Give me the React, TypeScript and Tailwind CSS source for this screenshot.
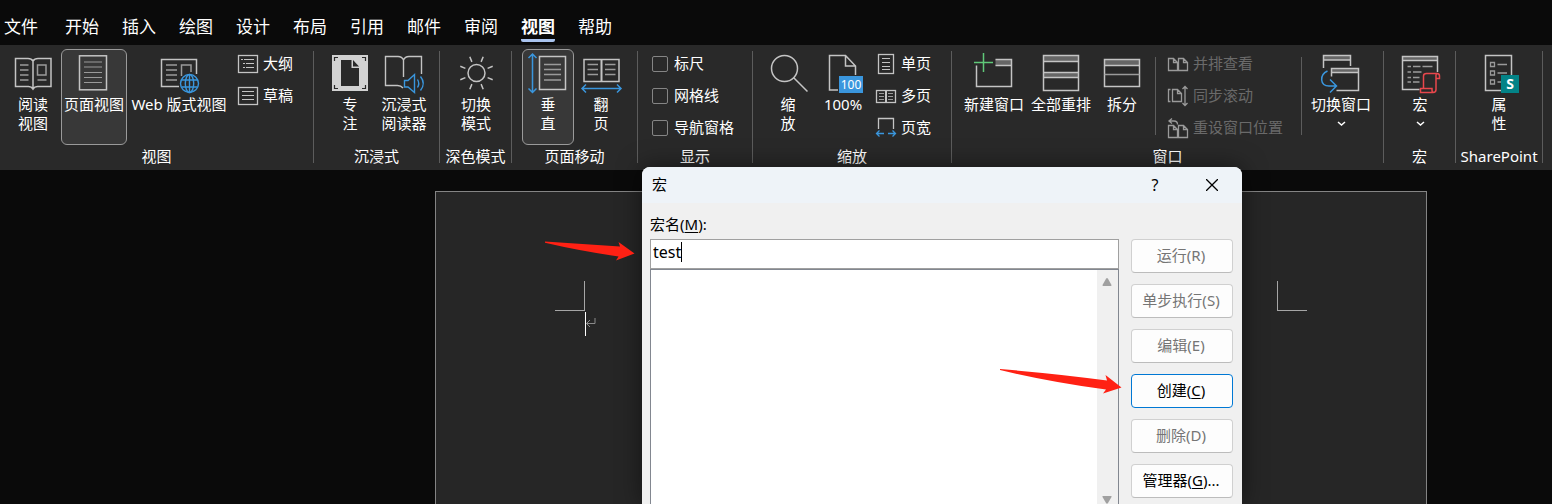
import { useState, type ReactNode } from "react";

const GRAY = "#c4c4c4";
const DIM = "#9a9a9a";
const BLUE = "#3a96dd";

function Icon({ children }: { children: ReactNode }) {
  return (
    <svg width="40" height="40" viewBox="0 0 40 40" fill="none" stroke={GRAY} strokeWidth="1.5" className="shrink-0 overflow-visible" aria-hidden="true">
      {children}
    </svg>
  );
}

function SmallIcon({ children, dim }: { children: ReactNode; dim?: boolean }) {
  return (
    <svg width="20" height="20" viewBox="0 0 20 20" fill="none" stroke={dim ? DIM : GRAY} strokeWidth="1.3" className="shrink-0 overflow-visible" aria-hidden="true">
      {children}
    </svg>
  );
}

const ReadIcon = () => (
  <Icon>
    <path d="M20 8Q18.500 5.500 15 5.500H2.500V33.500H15.500Q18.500 33.500 20 36Q21.500 33.500 24.500 33.500H38V5.500H25Q21.500 5.500 20 8V36" />
    <path stroke={DIM} d="M7 12H15.500M7 17H15.500M7 22H15.500M7 27H15.500M24.500 27H33.500" />
    <rect x="24.5" y="12" width="8.500" height="10" stroke={DIM} />
  </Icon>
);
const PageIcon = () => (
  <Icon>
    <rect x="5.500" y="2.800" width="27" height="34" />
    <path stroke={DIM} strokeWidth="1.200" d="M10 9H28M10 14H28M10 19.500H28M10 24.500H28M10 29.500H28" />
  </Icon>
);
const WebIcon = () => (
  <Icon>
    <path d="M20 33.500H2.500V6.500H37.500V21" />
    <path stroke={DIM} d="M7 12H18M7 17H18M7 22H18M7 27H18M22.500 23V12H32V19" />
    <g stroke={BLUE} strokeWidth="1.400">
      <circle cx="30.5" cy="30.500" r="9" />
      <ellipse cx="30.5" cy="30.500" rx="4.200" ry="9" />
      <path d="M30.500 21.500V39.500M22.500 27H38.500M22.500 34H38.500" />
    </g>
  </Icon>
);
const FocusIcon = () => (
  <Icon>
    <rect x="2" y="2" width="36" height="36" fill="#d2d2d2" stroke="none" />
    <path d="M11 7H21.500V15H29V33H11Z" fill="#292929" stroke="none" />
    <path d="M23 7L29 13.500H23Z" fill="#292929" stroke="none" />
    <path stroke="#292929" strokeWidth="1.200" d="M4.500 8V4.500H8M32 4.500H35.500V8M35.500 32V35.500H32M8 35.500H4.500V32" />
  </Icon>
);
const ReaderIcon = () => (
  <Icon>
    <path strokeWidth="1.400" d="M19.500 7Q18 3.500 14 3.500H1.500V32.500H13.500Q17 32.500 19 35M19.500 7V24M19.500 7Q21 3.500 25 3.500H37.500V21" />
    <g stroke={BLUE} strokeWidth="1.400">
      <path d="M20.500 27.500H24L30.500 21.500V39.500L24 34H20.500Z" />
      <path d="M33.500 26.500Q36 30.500 33.500 34.500M36.500 23.500Q42 30.500 36.500 37.500" />
    </g>
  </Icon>
);
const SunIcon = () => (
  <Icon>
    <circle cx="20.500" cy="20" r="8.500" />
    <path d="M31.600 15.400L36.700 13.300M31.600 24.600L36.700 26.700M9.400 15.400L4.300 13.300M9.400 24.600L4.300 26.700M25.100 8.900L27.200 3.800M15.900 8.900L13.800 3.800M25.100 31.100L27.200 36.200M15.900 31.100L13.800 36.200" />
  </Icon>
);
const VerticalIcon = () => (
  <Icon>
    <rect x="11.500" y="3.500" width="26" height="33" />
    <path stroke={DIM} d="M16 11.500H33M16 16.500H33M16 21.500H33M16 27H33" />
    <path stroke={BLUE} d="M4.500 1V39.500M.5 5L4.500 1L8.500 5M.5 35.500L4.500 39.500L8.500 35.500" />
  </Icon>
);
const FlipIcon = () => (
  <Icon>
    <rect x="3" y="6.500" width="35" height="22" />
    <path strokeWidth="2" d="M20.500 6V29" />
    <path stroke={DIM} d="M6.500 11.500H17M6.500 16.500H17M6.500 21.500H17M24 11.500H34.500M24 16.500H34.500M24 21.500H34.500" />
    <path stroke={BLUE} d="M1 35.500H40M5 31.500L1 35.500L5 39.500M36 31.500L40 35.500L36 39.500" />
  </Icon>
);
const ZoomIcon = () => (
  <Icon>
    <circle cx="16.500" cy="15.500" r="13" />
    <path d="M25.500 24.500L39.500 38.500" />
  </Icon>
);
const HundredIcon = () => (
  <Icon>
    <path d="M15 37H6.500V2.500H22.500L32.500 13V22M22.500 2.500V13H32.500" />
    <rect x="16" y="23" width="24" height="17" fill={BLUE} stroke="none" />
    <text x="28" y="36" textAnchor="middle" fontSize="12" fill="#fff" stroke="none">100</text>
  </Icon>
);
const NewWindowIcon = () => (
  <Icon>
    <rect x="21.500" y="6.500" width="16.500" height="6" fill="#666" stroke="none" />
    <path d="M21.500 6.500H37.500V33.500H2.500V12.500M21.500 12.500H37.500" />
    <path stroke="#5fc878" d="M0 9.500H19M9.500 0V19" />
  </Icon>
);
const ArrangeIcon = () => (
  <Icon>
    <path fill="#666" stroke="none" d="M2.500 2.500H37.500V8.500H2.500ZM2.500 19.500H37.500V24.500H2.500Z" />
    <path d="M2.500 2.500H37.500V37.500H2.500ZM2.500 8.500H37.500M2.500 19.500H37.500M2.500 24.500H37.500" />
  </Icon>
);
const SplitIcon = () => (
  <Icon>
    <path fill="#666" stroke="none" d="M2.500 6.500H37.500V12.500H2.500Z" />
    <path d="M2.500 6.500H37.500V33.500H2.500ZM2.500 12.500H37.500" />
    <path stroke={DIM} d="M2.500 21.500H37.500" />
  </Icon>
);
const SwitchIcon = () => (
  <Icon>
    <path fill="#666" stroke="none" d="M2.500 2.500H29V7H2.500ZM10.500 15.500H37.500V19.500H10.500Z" />
    <path d="M2.500 15V2.500H29.500V13M2.500 7H29.500M10.500 23.500V15.500H37.500V37.500H15.500M10.500 19.500H37.500" />
    <path stroke={BLUE} d="M6.500 18C-2 22-1 33 8 33H15.500M9 26.500L15.500 33L9 39.500" />
  </Icon>
);
const MacroIcon = () => (
  <Icon>
    <path fill="#666" stroke="none" d="M2.500 3.500H37.500V7.500H2.500Z" />
    <path d="M19.500 36.500H2.500V3.500H37.500V19M2.500 7.500H37.500" />
    <path stroke={DIM} strokeWidth="1.300" d="M7.500 13.500H11M13 13.500H20.500M22.500 13.500H32.500M7.500 19H11M13 19H21.500M7.500 24.500H11M13 24.500H19.500M7.500 29H11M13 29H19.500" />
    <path stroke="#e8474c" d="M23.500 35.500V23Q23.500 20.500 26.500 20.500H37Q39.500 20.500 39.500 23V25.500H36V36.500Q36 39.500 33 39.500H20.500V35.500H32V37Q32 39.500 33.500 39.500M36 25.500V22Q36 20.500 37.500 20.500" />
  </Icon>
);
const PropertiesIcon = () => (
  <Icon>
    <rect x="6.500" y="2.500" width="26" height="35" />
    <path stroke={DIM} strokeWidth="1.300" d="M11.500 9.500H15.500V13.500H11.500ZM11.500 18H15.500V22H11.500ZM11.500 27H15.500V31H11.500ZM18.500 11.500H28M18.500 20H28M18.500 29H22.500" />
    <rect x="22" y="22" width="18" height="18" fill="#038387" stroke="none" />
    <text x="31" y="36" textAnchor="middle" fontSize="14" fontWeight="700" fill="#fff" stroke="none">S</text>
  </Icon>
);

const docs = "M.5 4.500H5.500L9.500 8.500V16.500H.5ZM5.500 4.500V8.500H9.500M10.500 4.500H15.500L19.500 8.500V16.500H10.500ZM15.500 4.500V8.500H19.500";

const Chevron = () => (
  <svg width="9" height="19" viewBox="0 0 9 19" fill="none" stroke="#fff" strokeWidth="1.500" aria-hidden="true">
    <path d="M1 8L4.500 11L8 8" />
  </svg>
);

function BigButton({ icon, lines, width, active, menu }: { icon: ReactNode; lines: string[]; width: string; active?: boolean; menu?: boolean }) {
  return (
    <button
      type="button"
      aria-pressed={active}
      className={`flex h-24 shrink-0 flex-col items-center rounded-md border pt-[3px] leading-[19px] whitespace-nowrap ${width} ${active ? "border-[#9a9a9a] bg-[#383838]" : "border-transparent"}`}
    >
      {icon}
      <span className="mt-0.5 flex flex-col items-center">
        {lines.map((l) => (
          <span key={l}>{l}</span>
        ))}
      </span>
      {menu && <Chevron />}
    </button>
  );
}

function SmallButton({ icon, label, disabled }: { icon: ReactNode; label: string; disabled?: boolean }) {
  return (
    <button type="button" disabled={disabled} className={`flex h-[30px] items-center gap-[5px] whitespace-nowrap ${disabled ? "text-[#6a6a6a]" : ""}`}>
      {icon}
      <span className="pb-0.5">{label}</span>
    </button>
  );
}

function Group({ label, pad, children }: { label: string; pad: string; children: ReactNode }) {
  return (
    <>
      <section aria-label={label} className="flex shrink-0 flex-col pt-1">
        <div className={`flex h-24 justify-center ${pad}`}>{children}</div>
        <div className="h-[22px] text-center leading-[22px] whitespace-nowrap">{label}</div>
      </section>
      <div className="mt-1.5 h-28 w-px shrink-0 bg-[#5c5c5c]" />
    </>
  );
}

function Check({ label }: { label: string }) {
  return (
    <label className="flex h-[30px] items-center gap-1.5 whitespace-nowrap">
      <input type="checkbox" className="size-4 appearance-none rounded-xs border border-[#858585] checked:bg-[#3a96dd]" />
      <span className="pb-0.5">{label}</span>
    </label>
  );
}

const tabs = ["开始", "插入", "绘图", "设计", "布局", "引用", "邮件", "审阅", "视图", "帮助"];

const actions = [
  { text: "运行", k: "R", disabled: true },
  { text: "单步执行", k: "S", disabled: true },
  { text: "编辑", k: "E", disabled: true },
  { text: "创建", k: "C", primary: true },
  { text: "删除", k: "D", disabled: true },
  { text: "管理器", k: "G", tail: "..." },
];

function MacroDialog() {
  const [name, setName] = useState("test");
  return (
    <div role="dialog" aria-label="宏" className="absolute top-[167px] bottom-0 left-[642px] flex w-[600px] flex-col overflow-hidden rounded-t-lg bg-[#f0f0f0] text-black shadow-[0_0_24px_rgba(0,0,0,0.5)]">
      <header className="flex h-9 shrink-0 items-center bg-[#eef3f8] pr-[22px] pl-2.5">
        <h2 className="flex-1 pb-0.5">宏</h2>
        <button type="button" aria-label="帮助" className="mr-[41px] w-4 text-base">?</button>
        <button type="button" aria-label="关闭" className="flex size-4 items-center justify-center">
          <svg width="12" height="12" viewBox="0 0 12 12" stroke="#000" strokeWidth="1.300" aria-hidden="true">
            <path d="M0 0L12 12M12 0L0 12" />
          </svg>
        </button>
      </header>
      <div className="flex min-h-0 flex-1 flex-col pr-[9px] pl-2">
        <label htmlFor="macro-name" className="mt-2.5 mb-1 h-[22px] shrink-0 leading-[22px]">
          宏名(<u className="underline-offset-2">M</u>):
        </label>
        <div className="flex min-h-0 flex-1 gap-3">
          <div className="flex flex-1 flex-col">
            <div className="flex h-[30px] shrink-0 items-center border border-[#a0a0a0] bg-white pl-0.5">
              <input id="macro-name" value={name} onChange={(e) => setName(e.target.value)} className="mb-1 field-sizing-content text-base outline-none" />
              <span className="mb-1 h-5 w-px bg-black" />
            </div>
            <div className="flex flex-1 border border-b-0 border-[#828790] bg-white">
              <div role="listbox" aria-label="宏" className="flex-1" />
              <div className="flex w-[21px] flex-col items-center justify-between bg-[#f0f0f0] pt-2 pr-0.5">
                <svg width="10" height="8" viewBox="0 0 10 8" fill="#a0a0a0" aria-hidden="true">
                  <path d="M5 0Q5.500 0 6 .8L9.500 7Q9.500 8 9 8H1Q.5 8 .5 7L4 .8Q4.500 0 5 0Z" />
                </svg>
                <svg width="10" height="8" viewBox="0 0 10 8" fill="#a0a0a0" aria-hidden="true">
                  <path d="M.5 0H9.500V1L6 7Q5 8.500 4 7L.5 1Z" />
                </svg>
              </div>
            </div>
          </div>
          <div className="flex w-[102px] flex-col gap-[11px]">
            {actions.map((a) => (
              <button
                key={a.k}
                type="button"
                disabled={a.disabled}
                className={`h-[34px] shrink-0 rounded border bg-[#fdfdfd] pr-0.5 pb-0.5 whitespace-nowrap ${a.primary ? "border-[#0078d4]" : "border-[#d0d0d0] border-b-[#bcbcbc]"} ${a.disabled ? "text-[#757575]" : ""}`}
              >
                {a.text}({a.disabled ? a.k : <u className="underline-offset-2">{a.k}</u>}){a.tail}
              </button>
            ))}
          </div>
        </div>
      </div>
    </div>
  );
}

export default function App() {
  return (
    <div className="relative flex h-screen flex-col overflow-hidden bg-[#0a0a0a] font-['Noto_Sans','Noto_Sans_CJK_SC',sans-serif] text-[15px] text-white">
      <nav className="flex h-[45px] shrink-0 items-start gap-[23px] pt-[15px] pl-1 text-[17px] leading-6">
        <button type="button" className="mr-1 whitespace-nowrap">文件</button>
        {tabs.map((t) => (
          <button key={t} type="button" className={`border-b-3 whitespace-nowrap ${t === "视图" ? "rounded-xs border-[#a9c3ee] font-bold" : "border-transparent"}`}>
            {t}
          </button>
        ))}
      </nav>

      <div className="flex h-[125px] shrink-0 bg-[#292929]">
        <Group label="视图" pad="pl-[5px] pr-5">
          <BigButton icon={<ReadIcon />} lines={["阅读", "视图"]} width="w-[56px]" />
          <BigButton icon={<PageIcon />} lines={["页面视图"]} width="w-[66px]" active />
          <BigButton icon={<WebIcon />} lines={["Web 版式视图"]} width="w-[104px]" />
          <div className="flex flex-col gap-0.5 pl-[7px]">
            <SmallButton label="大纲" icon={<SmallIcon><rect x=".5" y="1.500" width="19" height="17" /><path strokeWidth="1" d="M3 5.500H5M6 5.500H16M5 9.500H7M8 9.500H16M5 13.500H7M8 13.500H16" /></SmallIcon>} />
            <SmallButton label="草稿" icon={<SmallIcon><rect x=".5" y="1.500" width="19" height="17" /><path strokeWidth="1" d="M4 5.500H16M4 9.500H16M4 13.500H16" /></SmallIcon>} />
          </div>
        </Group>
        <Group label="沉浸式" pad="pl-[9px] pr-2">
          <BigButton icon={<FocusIcon />} lines={["专", "注"]} width="w-[54px]" />
          <BigButton icon={<ReaderIcon />} lines={["沉浸式", "阅读器"]} width="w-[54px]" />
        </Group>
        <Group label="深色模式" pad="pl-[5px] pr-1">
          <BigButton icon={<SunIcon />} lines={["切换", "模式"]} width="w-[62px]" />
        </Group>
        <Group label="页面移动" pad="pl-2.5 pr-[9px]">
          <BigButton icon={<VerticalIcon />} lines={["垂", "直"]} width="w-[52px]" active />
          <BigButton icon={<FlipIcon />} lines={["翻", "页"]} width="w-[54px]" />
        </Group>
        <Group label="显示" pad="pl-3.5 pr-[18px]">
          <div className="flex flex-col gap-0.5">
            <Check label="标尺" />
            <Check label="网格线" />
            <Check label="导航窗格" />
          </div>
        </Group>
        <Group label="缩放" pad="pl-[7px] pr-5">
          <BigButton icon={<ZoomIcon />} lines={["缩", "放"]} width="w-[56px]" />
          <BigButton icon={<HundredIcon />} lines={["100%"]} width="w-[54px]" />
          <div className="flex flex-col gap-0.5 pl-1.5">
            <SmallButton label="单页" icon={<SmallIcon><rect x="2.500" y=".5" width="15" height="19" /><path strokeWidth="1" d="M6 4.500H14M6 8.500H14M6 12.500H14M6 15.500H14" /></SmallIcon>} />
            <SmallButton label="多页" icon={<SmallIcon><rect x=".5" y="4.500" width="19" height="12" /><path d="M10 4V17" strokeWidth="2" /><path strokeWidth="1" d="M3 7.500H8M3 10.500H8M3 13.500H8M12 7.500H17M12 10.500H17M12 13.500H17" stroke={DIM} /></SmallIcon>} />
            <SmallButton label="页宽" icon={<SmallIcon><path d="M2.500 11V.5H17.500V11" /><path stroke={BLUE} d="M.5 15.500H8M3.500 12.500L.5 15.500L3.500 18.500M12 15.500H19.500M16.500 12.500L19.500 15.500L16.500 18.500" /></SmallIcon>} />
          </div>
        </Group>
        <Group label="窗口" pad="pl-[9px] pr-[3px]">
          <BigButton icon={<NewWindowIcon />} lines={["新建窗口"]} width="w-[66px]" />
          <BigButton icon={<ArrangeIcon />} lines={["全部重排"]} width="w-[68px]" />
          <BigButton icon={<SplitIcon />} lines={["拆分"]} width="w-[54px]" />
          <div className="mt-2 ml-1.5 h-[78px] w-px bg-[#5c5c5c]" />
          <div className="flex flex-col gap-0.5 pr-[18px] pl-3">
            <SmallButton disabled label="并排查看" icon={<SmallIcon dim><path d={docs} /></SmallIcon>} />
            <SmallButton disabled label="同步滚动" icon={<SmallIcon dim><path d="M2.500 3.500H.5V15.500H2.500M4.500 3.500H9.500L13.500 7.500V15.500H4.500ZM9.500 3.500V7.500H13.500M17 .5V19.500M14.500 3L17 .5L19.500 3M14.500 17L17 19.500L19.500 17" /></SmallIcon>} />
            <SmallButton disabled label="重设窗口位置" icon={<SmallIcon dim><path d={docs} transform="translate(0 3)" /><path d="M1 3H6Q9.500 3 9.500 6.500M4 .5L1 3L4 5.500" /></SmallIcon>} />
          </div>
          <div className="mt-2 h-[78px] w-px bg-[#5c5c5c]" />
          <BigButton icon={<SwitchIcon />} lines={["切换窗口"]} width="w-[78px]" menu />
        </Group>
        <Group label="宏" pad="pl-[5px] pr-1">
          <BigButton icon={<MacroIcon />} lines={["宏"]} width="w-[62px]" menu />
        </Group>
        <Group label="SharePoint" pad="px-3">
          <BigButton icon={<PropertiesIcon />} lines={["属", "性"]} width="w-[62px]" />
        </Group>
      </div>

      <main className="flex min-h-0 flex-1 pt-[21px] pr-[125px] pl-[435px]">
        <article className="flex flex-1 items-start justify-between border border-b-0 border-[#848484] bg-[#262626] px-[119px] pt-[89px]">
          <div className="flex flex-col items-end">
            <div className="size-[30px] border-r border-b border-[#a6a6a6]" />
            <div className="relative mt-px h-6 w-0">
              <div className="h-6 w-px bg-white" />
              <svg width="10" height="10" viewBox="0 0 10 10" fill="none" stroke="#8a8a8a" className="absolute top-1.5 left-px" aria-hidden="true">
                <path d="M9 0V5.500H.5M4 2L.5 5.500L4 9" />
              </svg>
            </div>
          </div>
          <div className="size-[30px] border-b border-l border-[#a6a6a6]" />
        </article>
      </main>

      <MacroDialog />

      <svg width="90" height="20" viewBox="0 0 90 20" fill="#ff2114" className="absolute top-[241px] left-[545px]" aria-hidden="true">
        <path d="M0 .5L75 5.500L73.500 1L89.500 12.500L71 19.500L73.500 15.500Q35 10 0 1.800Z" />
      </svg>
      <svg width="122" height="26" viewBox="0 0 122 26" fill="#ff2114" className="absolute top-[369px] left-[1000px]" aria-hidden="true">
        <path d="M0 0Q60 5 107 11.500L105.500 6L121.500 18.500L103 24.500L106 20.500Q50 13 0 1Z" />
      </svg>
    </div>
  );
}
